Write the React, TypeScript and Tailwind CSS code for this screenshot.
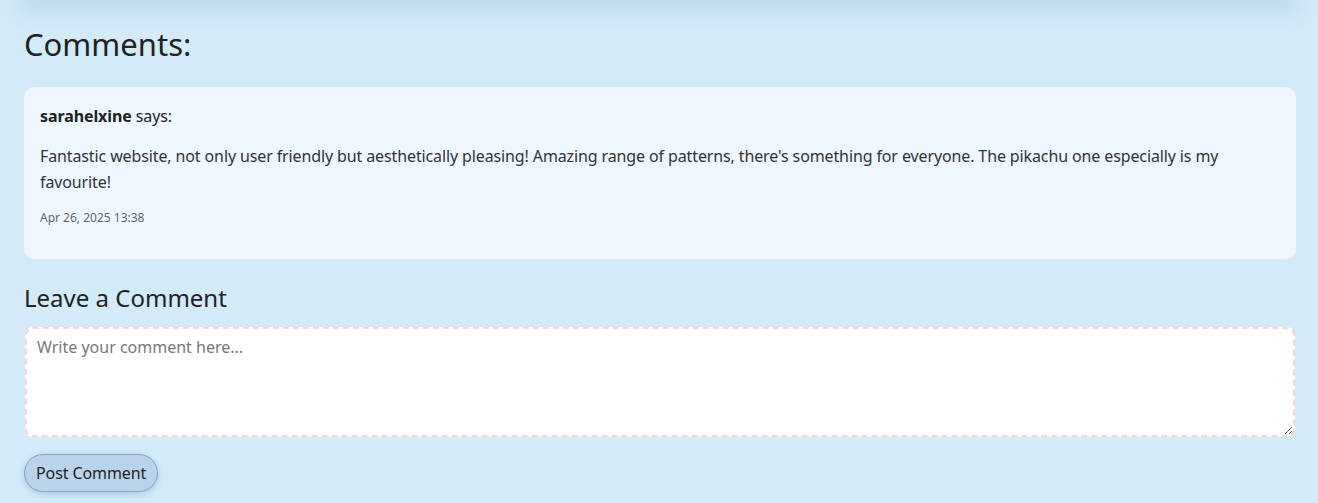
import React from "react";

export default function App() {
  return (
    <div
      className="min-h-[503px] bg-[#d3eaf9] overflow-hidden text-[#222]"
      style={{ fontFamily: "'Noto Sans', Lato, sans-serif" }}
    >
      <div className="h-[10px] -mt-[10px] mx-[20px] shadow-[0_6px_22px_rgba(90,130,160,0.35)] bg-[#d3eaf9]" />
      <div className="pl-6 pr-[22px] pt-[24px]">
        <h2 className="text-[31px] leading-[40px] font-normal text-[#222]">Comments:</h2>
        <div className="mt-[23px] bg-[#eef7ff] rounded-[10px] px-4 pt-[17px] pb-[33px]">
          <p className="text-[16px] leading-6 tracking-[-0.1px]">
            <span className="font-bold">sarahelxine</span> says:
          </p>
          <p className="mt-[15px] text-[16px] leading-[26px] text-[#333] tracking-[-0.12px]">
            Fantastic website, not only user friendly but aesthetically pleasing! Amazing range of patterns, there's something for everyone. The pikachu one especially is my favourite!
          </p>
          <p className="mt-[15px] text-[12px] leading-4 text-[#666]">Apr 26, 2025 13:38</p>
        </div>
        <h3 className="mt-[24px] text-[24px] leading-[30px] font-normal">Leave a Comment</h3>
        <div className="px-px">
          <textarea
            className="mt-[14px] block w-full h-[110px] rounded-[8px] bg-white border-2 border-dashed border-[#fad3cf] px-[10px] pt-[6px] pb-[9px] text-[16px] placeholder:text-[#777] outline-none"
            placeholder="Write your comment here..."
          />
        </div>
        <button className="mt-[17px] h-[38px] px-[11px] rounded-full bg-[#bad3ea] border border-[#7fa6c4] text-[16px] text-[#222] tracking-[-0.1px] shadow-[0_2px_6px_rgba(80,120,160,0.3)]">
          Post Comment
        </button>
      </div>
    </div>
  );
}
